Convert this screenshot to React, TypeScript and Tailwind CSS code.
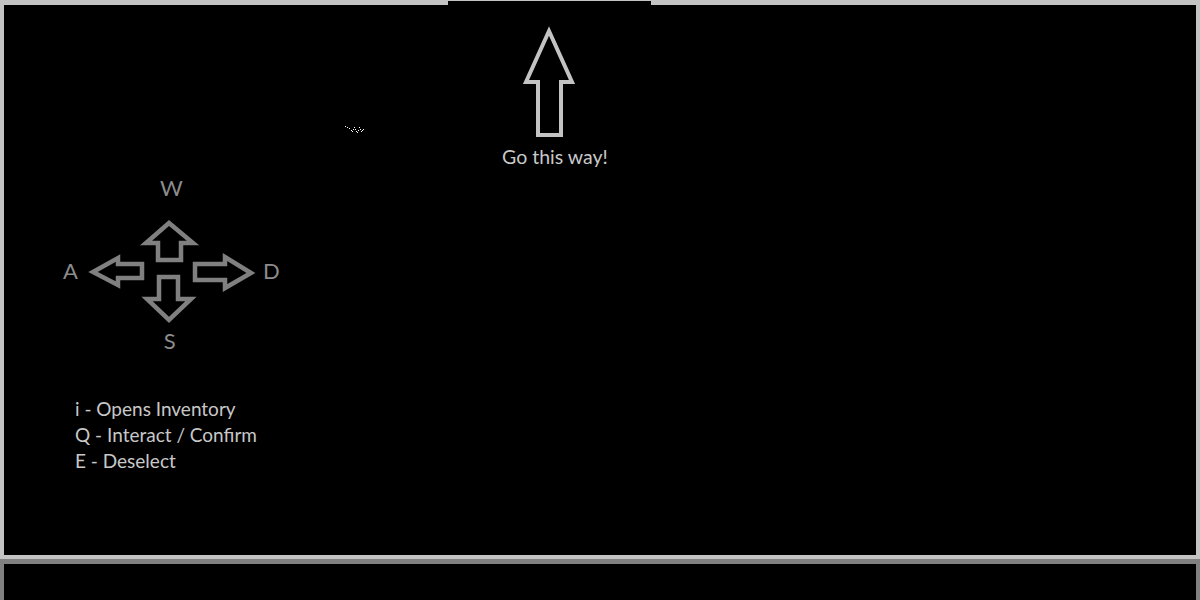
export default function App() {
  return (
    <div className="flex h-[600px] w-[1200px] flex-col overflow-hidden bg-black font-['Lato',sans-serif]">
      {/* top edge with the notch */}
      <div className="flex h-[5px] shrink-0">
        <div className="w-[448px] bg-[#c3c3c3]" />
        <div className="w-[203px] border-t border-[#c3c3c3]" />
        <div className="flex-1 bg-[#c3c3c3]" />
      </div>

      {/* game view */}
      <div className="relative flex h-[554px] shrink-0 flex-col border-x-4 border-b-4 border-[#c3c3c3]">
        <svg width="60" height="114" viewBox="0 0 60 114" className="ml-[515px] mt-[21px] block">
          <path
            d="M30 5 L7 56 L19 56 L19 109 L42 109 L42 56 L53 56 Z"
            fill="none"
            stroke="#c3c3c3"
            strokeWidth="4"
          />
        </svg>
        <p className="ml-[498px] mt-[4px] text-[19.5px] leading-[25px] text-[#c8c8c8]">Go this way!</p>

        {/* little sprite */}
        <svg width="28" height="16" viewBox="0 0 28 16" className="absolute left-[339px] top-[118px]">
          <g fill="#ffffff">
            <rect x="2" y="3" width="1" height="1" />
            <rect x="4" y="4" width="1" height="1" />
            <rect x="6" y="5" width="1" height="1" />
            <rect x="8" y="7" width="1" height="1" />
            <rect x="9" y="8" width="1" height="1" />
            <rect x="10" y="6" width="1" height="1" />
            <rect x="11" y="4" width="1" height="1" />
            <rect x="12" y="6" width="1" height="1" />
            <rect x="13" y="8" width="1" height="1" />
            <rect x="14" y="9" width="1" height="1" />
            <rect x="15" y="7" width="1" height="1" />
            <rect x="16" y="4" width="1" height="1" />
            <rect x="17" y="6" width="1" height="1" />
            <rect x="18" y="8" width="1" height="1" />
            <rect x="19" y="7" width="1" height="1" />
            <rect x="20" y="6" width="1" height="1" />
          </g>
        </svg>

        {/* controls */}
        <div className="ml-[59px] mt-[5px] flex w-fit flex-col items-center text-[22px] leading-[28px] text-[#8c8c8c]">
          <span>W</span>
          <div className="mt-[13px] flex items-center">
            <span>A</span>
            <svg width="172" height="112" viewBox="0 0 172 112" className="ml-[8px] mr-[5px]">
              <g fill="none" stroke="#808080" strokeWidth="4.5">
                <path d="M83 8 L60 28 L72 28 L72 45 L95 45 L95 28 L107 28 Z" />
                <path d="M7 57 L32 43 L32 49 L56 49 L56 63 L32 63 L32 70 Z" />
                <path d="M165 58 L139 42 L139 49 L109 49 L109 65 L139 65 L139 73 Z" />
                <path d="M73 62 L92 62 L92 84 L105 84 L83 105 L61 84 L73 84 Z" />
              </g>
            </svg>
            <span>D</span>
          </div>
          <span className="mr-[3px]">S</span>
        </div>

        <div className="ml-[71px] mt-[41px] text-[19px] leading-[26px] text-[#c8c8c8]">
          <p>i - Opens Inventory</p>
          <p>Q - Interact / Confirm</p>
          <p>E - Deselect</p>
        </div>
      </div>

      {/* lower panel */}
      <div className="flex-1 border-x-4 border-t-[5px] border-[#808080]" />
    </div>
  );
}
